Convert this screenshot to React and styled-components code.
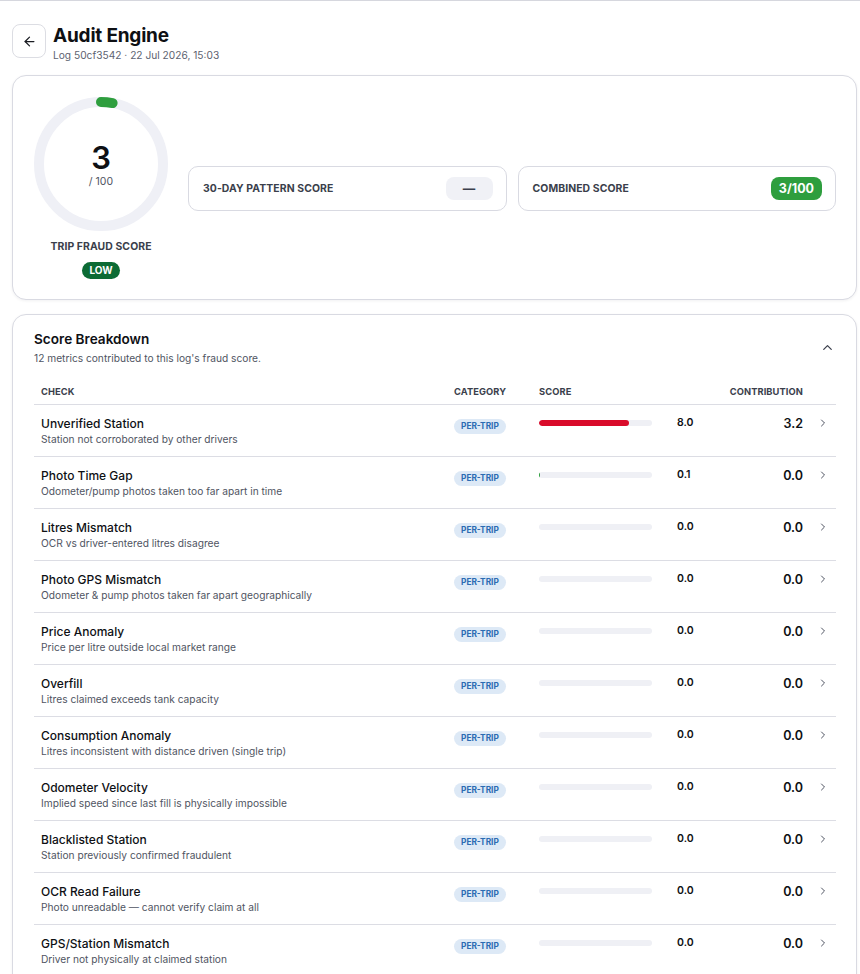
import styled, { createGlobalStyle } from "styled-components";
import { ArrowLeft, ChevronRight, ChevronUp } from "lucide-react";

const GlobalStyle = createGlobalStyle`
  body {
    margin: 0;
    background: #ffffff;
    font-family: Inter, "Noto Sans", sans-serif;
    color: #111318;
  }
`;

const Page = styled.div`
  border-top: 1px solid #d6d7de;
  padding: 23px 3px 40px 12px;
`;

const Header = styled.header`
  display: flex;
  align-items: flex-start;
  gap: 7px;
  margin-bottom: 13px;
`;

const BackButton = styled.button`
  width: 34px;
  height: 34px;
  border: 1px solid #dcdde3;
  border-radius: 8px;
  background: #fff;
  display: flex;
  align-items: center;
  justify-content: center;
  padding: 0;
  color: #1a1c22;
`;

const TitleBlock = styled.div`
  display: flex;
  flex-direction: column;
`;

const Title = styled.h1`
  margin: 0;
  font-size: 19px;
  line-height: 24px;
  font-weight: 700;
  letter-spacing: -0.2px;
  color: #0e1014;
`;

const Subtitle = styled.div`
  font-size: 10.2px;
  line-height: 14px;
  color: #5d6270;
`;

const Card = styled.section`
  border: 1px solid #d9dae2;
  border-radius: 14px;
  background: #fff;
  box-shadow: 0 1px 3px rgba(20, 22, 40, 0.06);
  padding: ${(p) => p.$pad};
  margin-bottom: 14px;
`;

const ScoreRow = styled.div`
  display: flex;
  align-items: center;
  gap: 11px;
`;

const GaugeColumn = styled.div`
  width: 134px;
  margin-right: 9px;
  display: flex;
  flex-direction: column;
  align-items: center;
`;

const GaugeWrap = styled.div`
  position: relative;
  width: 134px;
  height: 134px;
`;

const GaugeCenter = styled.div`
  position: absolute;
  inset: 0;
  display: flex;
  flex-direction: column;
  align-items: center;
  justify-content: center;
  padding-top: 1px;
`;

const GaugeNumber = styled.div`
  font-size: 31px;
  line-height: 34px;
  font-weight: 600;
  color: #0e1014;
`;

const GaugeMax = styled.div`
  font-size: 10.5px;
  line-height: 13px;
  color: #4f5462;
`;

const SmallLabel = styled.div`
  font-size: 10.4px;
  font-weight: 700;
  letter-spacing: 0.1px;
  text-transform: uppercase;
  color: #3b3f4c;
  white-space: nowrap;
`;

const GaugeLabel = styled(SmallLabel)`
  margin-top: 9px;
`;

const LevelPill = styled.div`
  margin-top: 9px;
  background: #0c6b34;
  color: #fff;
  font-size: 10px;
  font-weight: 700;
  line-height: 17px;
  padding: 0 7px;
  border-radius: 9px;
`;

const StatBox = styled.div`
  flex: 1;
  height: 45px;
  border: 1px solid #d9dae2;
  border-radius: 10px;
  display: flex;
  align-items: center;
  justify-content: space-between;
  padding: 0 13px 0 14px;
  box-sizing: border-box;
`;

const StatValue = styled.div`
  min-width: 47px;
  height: 23px;
  box-sizing: border-box;
  padding: 0 8px;
  border-radius: 8px;
  display: flex;
  align-items: center;
  justify-content: center;
  font-size: 12.5px;
  font-weight: 700;
  background: ${(p) => (p.$tone === "good" ? "#2e9e3e" : "#f0f1f6")};
  color: ${(p) => (p.$tone === "good" ? "#fff" : "#3b3f4c")};
`;

const SectionHead = styled.div`
  display: flex;
  justify-content: space-between;
  align-items: flex-start;
  margin-bottom: 15px;
`;

const SectionTitle = styled.h2`
  margin: 0;
  font-size: 13.6px;
  line-height: 20px;
  font-weight: 600;
  color: #0e1014;
`;

const SectionSub = styled.div`
  margin-top: 2px;
  font-size: 10.2px;
  line-height: 14px;
  color: #4f5462;
`;

const Collapse = styled.div`
  margin-top: 11px;
  margin-right: 1px;
  color: #3b3f4c;
  display: flex;
`;

const Grid = styled.div`
  display: grid;
  grid-template-columns: 1fr 85px 138px 60px 66px 33px;
  padding-left: 7px;
  border-bottom: 1px solid #dcdde4;
  box-sizing: border-box;
`;

const HeadRow = styled(Grid)`
  height: 25px;
  padding-bottom: 1px;
  align-items: center;
`;

const HeadCell = styled(SmallLabel)`
  font-size: 9.3px;
  justify-self: ${(p) => (p.$end ? "end" : "start")};
`;

const Row = styled(Grid)`
  height: 52px;
  padding-top: 11px;
  align-items: start;
`;

const CheckName = styled.div`
  font-size: 12px;
  line-height: 16px;
  font-weight: 500;
  color: #0e1014;
`;

const CheckDesc = styled.div`
  font-size: 10.2px;
  line-height: 15px;
  color: #4f5462;
`;

const CategoryPill = styled.span`
  justify-self: start;
  margin-top: 3px;
  height: 15px;
  line-height: 15px;
  padding: 0 7px;
  border-radius: 8px;
  background: #dde9f6;
  color: #2b6cb3;
  font-size: 8.3px;
  font-weight: 700;
`;

const BarTrack = styled.div`
  margin-top: 4px;
  width: 113px;
  height: 6px;
  border-radius: 3px;
  background: #eff0f5;
  overflow: hidden;
`;

const BarFill = styled.div`
  height: 100%;
  border-radius: 3px;
  background: ${(p) => p.$color};
`;

const ScoreValue = styled.div`
  font-size: 10.5px;
  line-height: 14px;
  font-weight: 600;
  color: #0e1014;
`;

const Contribution = styled.div`
  justify-self: end;
  font-size: 12.5px;
  line-height: 16px;
  font-weight: 600;
  color: #0e1014;
`;

const RowChevron = styled.div`
  justify-self: center;
  margin-top: 1px;
  margin-left: 6px;
  color: #4f5462;
  display: flex;
`;

const checks = [
  ["Unverified Station", "Station not corroborated by other drivers", 8.0, 3.2],
  ["Photo Time Gap", "Odometer/pump photos taken too far apart in time", 0.1, 0.0],
  ["Litres Mismatch", "OCR vs driver-entered litres disagree", 0, 0],
  ["Photo GPS Mismatch", "Odometer & pump photos taken far apart geographically", 0, 0],
  ["Price Anomaly", "Price per litre outside local market range", 0, 0],
  ["Overfill", "Litres claimed exceeds tank capacity", 0, 0],
  ["Consumption Anomaly", "Litres inconsistent with distance driven (single trip)", 0, 0],
  ["Odometer Velocity", "Implied speed since last fill is physically impossible", 0, 0],
  ["Blacklisted Station", "Station previously confirmed fraudulent", 0, 0],
  ["OCR Read Failure", "Photo unreadable — cannot verify claim at all", 0, 0],
  ["GPS/Station Mismatch", "Driver not physically at claimed station", 0, 0],
  ["Duplicate Receipt", "Receipt already submitted on another log", 0, 0],
];

function Gauge({ value }) {
  const r = 62;
  const c = 2 * Math.PI * r;
  const len = (value / 100) * c;
  return (
    <GaugeWrap>
      <svg width="134" height="134" viewBox="0 0 134 134">
        <circle cx="67" cy="67" r={r} fill="none" stroke="#eff0f6" strokeWidth="10" />
        <circle
          cx="67"
          cy="67"
          r={r}
          fill="none"
          stroke="#2e9e3e"
          strokeWidth="10"
          strokeLinecap="round"
          strokeDasharray={`${len} ${c}`}
          transform="rotate(-90 67 67)"
        />
      </svg>
      <GaugeCenter>
        <GaugeNumber>{value}</GaugeNumber>
        <GaugeMax>/ 100</GaugeMax>
      </GaugeCenter>
    </GaugeWrap>
  );
}

export default function App() {
  return (
    <Page>
      <GlobalStyle />
      <Header>
        <BackButton aria-label="Back">
          <ArrowLeft size={15} strokeWidth={2} />
        </BackButton>
        <TitleBlock>
          <Title>Audit Engine</Title>
          <Subtitle>Log 50cf3542 · 22 Jul 2026, 15:03</Subtitle>
        </TitleBlock>
      </Header>

      <Card $pad="21px 20px 20px 21px">
        <ScoreRow>
          <GaugeColumn>
            <Gauge value={3} />
            <GaugeLabel>Trip Fraud Score</GaugeLabel>
            <LevelPill>LOW</LevelPill>
          </GaugeColumn>
          <StatBox>
            <SmallLabel>30-Day Pattern Score</SmallLabel>
            <StatValue>—</StatValue>
          </StatBox>
          <StatBox>
            <SmallLabel>Combined Score</SmallLabel>
            <StatValue $tone="good">3/100</StatValue>
          </StatBox>
        </ScoreRow>
      </Card>

      <Card $pad="14px 20px 10px 21px">
        <SectionHead>
          <div>
            <SectionTitle>Score Breakdown</SectionTitle>
            <SectionSub>12 metrics contributed to this log's fraud score.</SectionSub>
          </div>
          <Collapse>
            <ChevronUp size={15} strokeWidth={2} />
          </Collapse>
        </SectionHead>

        <HeadRow>
          <HeadCell>Check</HeadCell>
          <HeadCell>Category</HeadCell>
          <HeadCell>Score</HeadCell>
          <span />
          <HeadCell $end>Contribution</HeadCell>
          <span />
        </HeadRow>

        {checks.map(([name, desc, score, contrib]) => (
          <Row key={name}>
            <div>
              <CheckName>{name}</CheckName>
              <CheckDesc>{desc}</CheckDesc>
            </div>
            <CategoryPill>PER-TRIP</CategoryPill>
            <BarTrack>
              <BarFill
                $color={score >= 5 ? "#d90b2a" : "#2e9e3e"}
                style={{ width: `${score * 10}%` }}
              />
            </BarTrack>
            <ScoreValue>{score.toFixed(1)}</ScoreValue>
            <Contribution>{contrib.toFixed(1)}</Contribution>
            <RowChevron>
              <ChevronRight size={12} strokeWidth={2} />
            </RowChevron>
          </Row>
        ))}
      </Card>
    </Page>
  );
}
